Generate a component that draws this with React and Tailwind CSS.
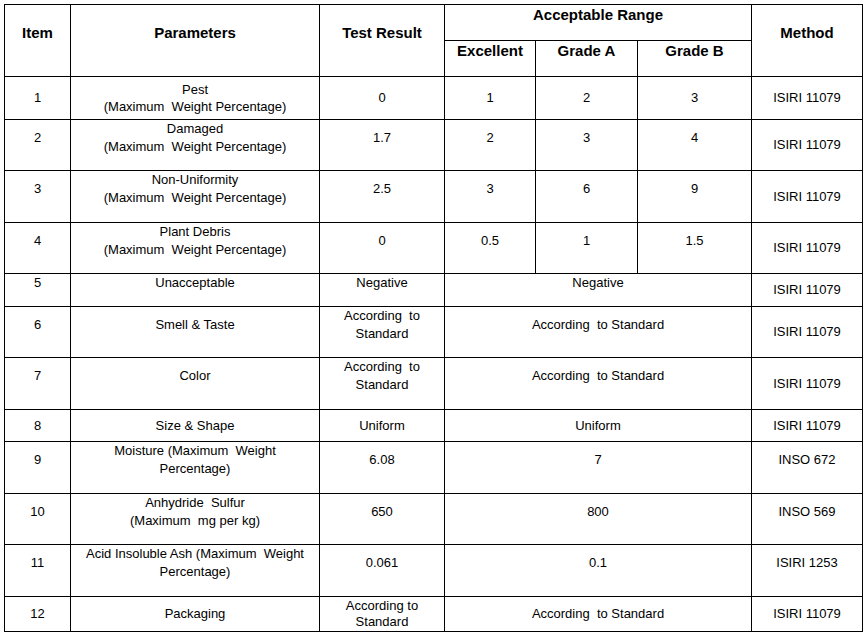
import React from "react";

const rows = [
  {
    item: "1",
    param: ["Pest", "(Maximum  Weight Percentage)"],
    paramLead: "leading-[17px]",
    result: ["0"],
    range: ["1", "2", "3"],
    method: "ISIRI 11079",
    box: "",
    methodBox: "",
  },
  {
    item: "2",
    param: ["Damaged", "(Maximum  Weight Percentage)"],
    result: ["1.7"],
    range: ["2", "3", "4"],
    method: "ISIRI 11079",
    box: "h-[36px]",
    methodBox: "",
  },
  {
    item: "3",
    param: ["Non-Uniformity", "(Maximum  Weight Percentage)"],
    result: ["2.5"],
    range: ["3", "6", "9"],
    method: "ISIRI 11079",
    box: "h-[36px]",
    methodBox: "",
  },
  {
    item: "4",
    param: ["Plant Debris", "(Maximum  Weight Percentage)"],
    result: ["0"],
    range: ["0.5", "1", "1.5"],
    method: "ISIRI 11079",
    box: "h-[36px]",
    methodBox: "",
  },
  {
    item: "5",
    param: ["Unacceptable"],
    result: ["Negative"],
    range: ["Negative"],
    method: "ISIRI 11079",
    box: "h-[18px]",
    methodBox: "",
  },
  {
    item: "6",
    param: ["Smell & Taste"],
    result: ["According  to", "Standard"],
    range: ["According  to Standard"],
    method: "ISIRI 11079",
    box: "h-[36px]",
    methodBox: "",
  },
  {
    item: "7",
    param: ["Color"],
    result: ["According  to", "Standard"],
    range: ["According  to Standard"],
    method: "ISIRI 11079",
    box: "h-[36px]",
    methodBox: "",
  },
  {
    item: "8",
    param: ["Size & Shape"],
    result: ["Uniform"],
    range: ["Uniform"],
    method: "ISIRI 11079",
    box: "",
    methodBox: "",
  },
  {
    item: "9",
    param: ["Moisture (Maximum  Weight", "Percentage)"],
    result: ["6.08"],
    range: ["7"],
    method: "INSO 672",
    box: "h-[36px]",
    methodBox: "h-[36px]",
  },
  {
    item: "10",
    param: ["Anhydride  Sulfur", "(Maximum  mg per kg)"],
    result: ["650"],
    range: ["800"],
    method: "INSO 569",
    box: "h-[36px]",
    methodBox: "h-[36px]",
  },
  {
    item: "11",
    param: ["Acid Insoluble Ash (Maximum  Weight", "Percentage)"],
    result: ["0.061"],
    range: ["0.1"],
    method: "ISIRI 1253",
    box: "h-[36px]",
    methodBox: "h-[36px]",
  },
  {
    item: "12",
    param: ["Packaging"],
    result: ["According to", "Standard"],
    resultLead: "leading-[16px]",
    range: ["According  to Standard"],
    method: "ISIRI 11079",
    box: "",
    methodBox: "",
  },
];

// box = "" means centred in the whole cell, otherwise a fixed box at the top
const Cell = ({ lines, box, lead = "leading-[18px]", span = "" }) => (
  <div
    className={`bg-white flex flex-col items-center ${
      box ? "justify-start" : "justify-center"
    } ${span}`}
  >
    <div
      className={`flex flex-col items-center justify-center text-center ${box} ${lead}`}
    >
      {lines.map((l, i) => (
        <span key={i} className="whitespace-pre">
          {l}
        </span>
      ))}
    </div>
  </div>
);

const Head = ({ children, className = "" }) => (
  <div
    className={`bg-white flex justify-center text-center font-bold text-[15px] leading-[20px] ${className}`}
  >
    {children}
  </div>
);

export default function App() {
  return (
    <div className="min-h-screen bg-white pt-1 pl-1 text-black font-['Liberation_Sans',Arial,sans-serif] text-[13px]">
      <div className="inline-grid bg-black gap-px p-px grid-cols-[65px_248px_124px_90px_101px_113px_110px] grid-rows-[35px_35px_42px_50px_51px_50px_32px_50px_51px_31px_51px_50px_51px_34px]">
        <Head className="row-span-2 pt-[18px]">Item</Head>
        <Head className="row-span-2 pt-[18px]">Parameters</Head>
        <Head className="row-span-2 pt-[18px]">Test Result</Head>
        <Head className="col-span-3">Acceptable Range</Head>
        <Head className="row-span-2 pt-[18px]">Method</Head>
        <Head>Excellent</Head>
        <Head>Grade A</Head>
        <Head>Grade B</Head>

        {rows.map((r) => (
          <React.Fragment key={r.item}>
            <Cell lines={[r.item]} box={r.box} />
            <Cell lines={r.param} box={r.box} lead={r.paramLead} />
            <Cell lines={r.result} box={r.box} lead={r.resultLead} />
            {r.range.length === 3 ? (
              r.range.map((v, i) => (
                <Cell key={i} lines={[v]} box={r.box} />
              ))
            ) : (
              <Cell lines={r.range} box={r.box} span="col-span-3" />
            )}
            <Cell lines={[r.method]} box={r.methodBox} />
          </React.Fragment>
        ))}
      </div>
    </div>
  );
}
